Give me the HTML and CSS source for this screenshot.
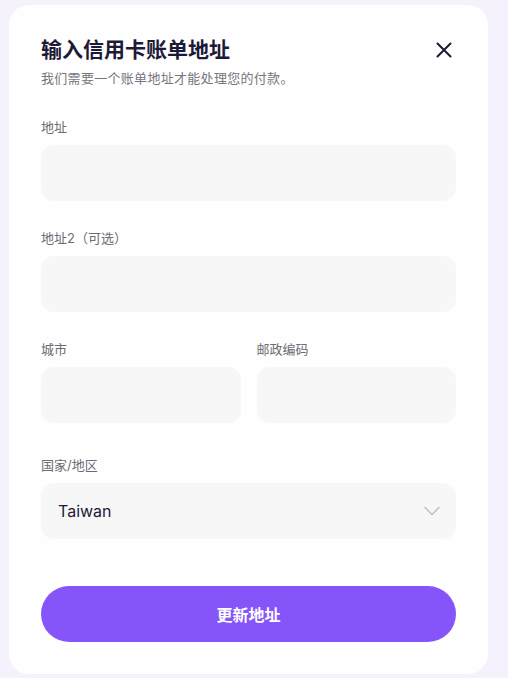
FILE: index.html
```html
<!DOCTYPE html>
<html lang="zh-CN">
<head>
<meta charset="utf-8">
<title>输入信用卡账单地址</title>
<link rel="stylesheet" href="styles.css">
</head>
<body>
<div class="card">
  <div class="header">
    <h1 class="title">输入信用卡账单地址</h1>
    <button class="close" aria-label="关闭">
      <svg width="24" height="24" viewBox="0 0 24 24" fill="none" stroke="#1c1a38" stroke-width="2" stroke-linecap="round"><path d="M5.5 5.5L18.5 18.5M18.5 5.5L5.5 18.5"/></svg>
    </button>
  </div>
  <p class="subtitle">我们需要一个账单地址才能处理您的付款。</p>

  <div class="field first">
    <label class="label">地址</label>
    <div class="input"></div>
  </div>
  <div class="field">
    <label class="label">地址2（可选）</label>
    <div class="input"></div>
  </div>
  <div class="row">
    <div class="field">
      <label class="label">城市</label>
      <div class="input"></div>
    </div>
    <div class="field">
      <label class="label">邮政编码</label>
      <div class="input"></div>
    </div>
  </div>
  <div class="field country">
    <label class="label">国家/地区</label>
    <div class="input select">
      <span class="value">Taiwan</span>
      <svg width="24" height="24" viewBox="0 0 24 24" fill="none" stroke="#c2c2c6" stroke-width="1.6" stroke-linecap="round" stroke-linejoin="round"><path d="M5 8.5L12 15.5L19 8.5"/></svg>
    </div>
  </div>
  <button class="submit">更新地址</button>
</div>
</body>
</html>
```
FILE: styles.css
```css
* { box-sizing: border-box; }
html, body { margin: 0; padding: 0; }
body {
  background: #f5f2fe;
  font-family: "Inter", "Noto Sans CJK SC", sans-serif;
  width: 508px;
  height: 678px;
  overflow: hidden;
}
.card {
  margin: 5px 0 0 9px;
  width: 479px;
  height: 669px;
  background: #fefeff;
  border-radius: 20px;
  padding: 31px 32px 32px 32px;
  display: flex;
  flex-direction: column;
}
.header {
  display: flex;
  align-items: center;
  justify-content: space-between;
  height: 28px;
}
.title {
  margin: 0;
  font-size: 21px;
  line-height: 28px;
  font-weight: 700;
  color: #1c1a36;
}
.close {
  border: 0;
  background: none;
  padding: 0;
  width: 24px;
  height: 24px;
  display: flex;
}
.subtitle {
  margin: 5px 0 0 0;
  font-size: 13px;
  line-height: 18px;
  letter-spacing: 0.3px;
  color: #77777d;
}
.field {
  display: flex;
  flex-direction: column;
  margin-top: 28px;
}
.field.first { margin-top: 31px; }
.field.country { margin-top: 33px; }
.label {
  font-size: 13px;
  line-height: 18px;
  color: #6c6c73;
}
.input {
  margin-top: 9px;
  height: 56px;
  background: #f7f7f8;
  border-radius: 13px;
}
.row {
  display: grid;
  grid-template-columns: 1fr 1fr;
  column-gap: 16px;
}
.select {
  display: flex;
  align-items: center;
  justify-content: space-between;
  padding: 0 12px 0 17px;
}
.value {
  font-size: 16px;
  color: #1c1a36;
}
.submit {
  margin-top: 47px;
  height: 57px;
  border: 0;
  border-radius: 29px;
  background: #8655f9;
  color: #ffffff;
  font-family: "Inter", "Noto Sans CJK SC", sans-serif;
  font-size: 16px;
  font-weight: 700;
}
```
